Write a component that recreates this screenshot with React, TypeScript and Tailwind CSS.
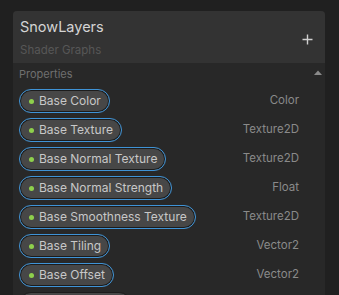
import React from "react";

const props = [
  { name: "Base Color", type: "Color" },
  { name: "Base Texture", type: "Texture2D" },
  { name: "Base Normal Texture", type: "Texture2D" },
  { name: "Base Normal Strength", type: "Float" },
  { name: "Base Smoothness Texture", type: "Texture2D" },
  { name: "Base Tiling", type: "Vector2" },
  { name: "Base Offset", type: "Vector2" },
];

export default function App() {
  return (
    <div
      className="w-[339px] h-[295px] overflow-hidden bg-[#202020] pt-[11px] pl-[13px]"
      style={{ fontFamily: "Inter, 'Noto Sans', sans-serif" }}
    >
      <div className="w-[312px] h-[300px] bg-[#282828] rounded-t-[4px] overflow-hidden">
        <div className="h-[52px] bg-[#333333] flex items-start justify-between pl-[7px] pr-[12px] pt-[7px]">
          <div className="flex flex-col">
            <span className="text-[14.5px] leading-[18px] text-[#d4d4d4]">SnowLayers</span>
            <span className="text-[11.5px] leading-[16px] mt-[6px] text-[#575757]">Shader Graphs</span>
          </div>
          <svg width="11" height="11" viewBox="0 0 11 11" className="mt-[16px]">
            <path d="M5.5 0.5v10M0.5 5.5h10" stroke="#cfcfcf" strokeWidth="1.4" />
          </svg>
        </div>
        <div className="flex items-center justify-between h-[22px] pl-[6px] pr-[2px]">
          <span className="text-[11px] text-[#6f6f6f]">Properties</span>
          <svg width="10" height="6" viewBox="0 0 10 6" className="mb-[4px]">
            <path d="M1 6L5 1.5L9 6Z" fill="#8a8a8a" />
          </svg>
        </div>
        <div className="flex flex-col gap-[5px] pl-[6px] pr-[26px] pt-[4px]">
          {props.map((p) => (
            <div key={p.name} className="flex items-center justify-between h-[24px]">
              <div className="h-[24px] flex items-center rounded-full border border-[#3f93d6] bg-[#474747] shadow-[inset_0_0_0_1px_#1c1c1c] pl-[9px] pr-[8px]">
                <span className="w-[5px] h-[5px] rounded-full bg-[#8ed04c] mr-[5px]" />
                <span className="text-[12px] text-[#c8c8c8] leading-none">{p.name}</span>
              </div>
              <span className="text-[11.5px] text-[#8a8a8a]">{p.type}</span>
            </div>
          ))}
          <div className="flex h-[24px]">
            <div className="h-[24px] w-[112px] rounded-full border border-[#1c1c1c] bg-[#474747]" />
          </div>
        </div>
      </div>
    </div>
  );
}
